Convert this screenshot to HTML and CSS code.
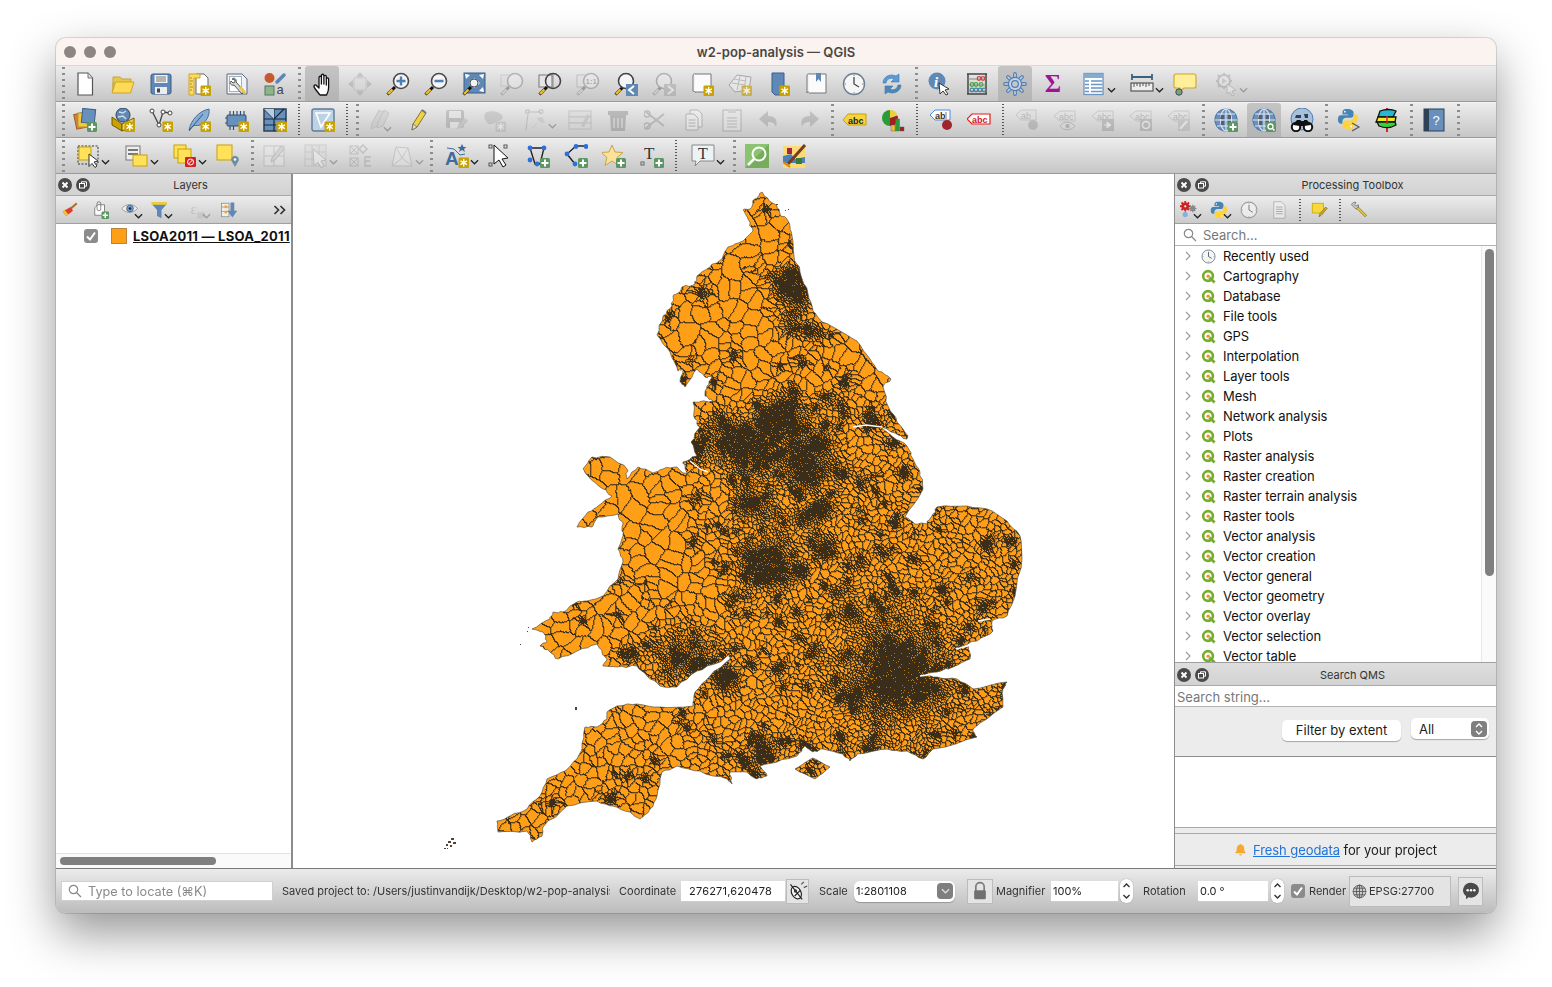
FILE: index.html
```html
<!DOCTYPE html>
<html lang="en">
<head>
  <meta charset="UTF-8" />
  <title>w2-pop-analysis — QGIS</title>
  <link rel="stylesheet" href="styles.css">
</head>
<body>

<svg class="defs" xmlns="http://www.w3.org/2000/svg">
  <defs>
    <g id="bs"><rect x="13.5" y="13.5" width="10.5" height="10.5" rx="1" fill="#c9a100"/><path d="M18.7 15v7.5M15.5 16.9l6.4 3.7M21.9 16.9l-6.4 3.7" stroke="#fff" stroke-width="1.4"/></g>
    <g id="bp"><rect x="14" y="14" width="10" height="10" rx="1.5" fill="#5c9663"/><path d="M19 15.5v7M15.5 19h7" stroke="#fff" stroke-width="2"/></g>
    <g id="tail"><path d="M1.5 22.5l7.5-7.5" stroke="#111" stroke-width="3"/><path d="M2 22l4.5-4.5" stroke="#efc02c" stroke-width="2.4"/></g>
    <g id="glass"><circle cx="15" cy="9" r="7.5" fill="#f5f5f5" stroke="#4a4a4a" stroke-width="1.6"/></g>
    <g id="abc-tag"><path d="M1 8l6-5h15v10H7z" fill="#e6e1d4" stroke="#8f8a78"/><text x="6" y="11.5" font-family="Liberation Sans" font-size="9" fill="#555">abc</text></g>
  </defs>
  <symbol id="new" viewBox="0 0 24 24"><path d="M5 1h10l4.500 5v17H5z" fill="#fff" stroke="#555" stroke-width="1.200"/><path d="M15 1v5h4.500" fill="#ddd" stroke="#777"/></symbol>
  <symbol id="open" viewBox="0 0 24 24"><path d="M2 19V5h7l2 2h9v4H2z" fill="#e8c648" stroke="#c9a530"/><path d="M1 21l3.500-11H23l-3.500 11z" fill="#ffda56" stroke="#c9a530"/></symbol>
  <symbol id="save" viewBox="0 0 24 24"><rect x="2" y="2" width="20" height="20" rx="2" fill="#5f88b6" stroke="#3b5d87"/><rect x="5.500" y="3" width="13" height="8" fill="#f2f2f2"/><path d="M7 5h10M7 7h10M7 9h10" stroke="#777"/><rect x="6" y="15" width="12" height="7" fill="#eee"/><rect x="8" y="16.500" width="3" height="4" fill="#445"/></symbol>
  <symbol id="tpl" viewBox="0 0 24 24"><path d="M9 2h8l4 4v16H9z" fill="#fff" stroke="#666"/><path d="M2 2h11v4H7v17H2z" fill="#ffdc58" stroke="#c9a530"/><path d="M3 6h2M3 9h3M3 12h2M3 15h3M3 18h2" stroke="#a8862a"/><use href="#bs"/></symbol>
  <symbol id="layout" viewBox="0 0 24 24"><path d="M2 2h15l5 5v15H2z" fill="#eef3fb" stroke="#667"/><rect x="4.500" y="4.500" width="12" height="15" fill="#fff" stroke="#9cb3d0"/><path d="M7 7c2-2 5 0 4 3l8 9-2 3-8-9c-3 1-5-2-3-4l2 2 2-1v-2z" fill="#d8d8d8" stroke="#555"/><path d="M14 16l5 6 2-2-5-6z" fill="#e8c840"/></symbol>
  <symbol id="style" viewBox="0 0 24 24"><circle cx="6.500" cy="6" r="5" fill="#c8582e"/><path d="M14 10L21 3" stroke="#5b87b5" stroke-width="3.500" stroke-linecap="round"/><rect x="2" y="14" width="9" height="9" fill="#8cb58d" stroke="#55775a"/><text x="13.500" y="22" font-family="Liberation Sans" font-size="13" fill="#444">a</text></symbol>
  <symbol id="hand" viewBox="-2 0 24 24"><path d="M8 23c-2-3-5.500-6-6-8.500-.3-1.500 1.400-2 2.400-1L7 16V5.500c0-1.700 2.400-1.700 2.400 0V12V3.500c0-1.700 2.500-1.700 2.500 0V12V4.500c0-1.600 2.400-1.600 2.400 0V13V7c0-1.500 2.300-1.500 2.300 0v9c0 3-1 5-2 7z" fill="#fff" stroke="#111" stroke-width="1.300" stroke-linejoin="round"/></symbol>
  <symbol id="pansel" viewBox="0 0 24 24"><rect x="6" y="6" width="12" height="12" fill="#f3e27a" stroke="#999"/><path d="M12 0l4 5H8zM12 24l4-5H8zM0 12l5-4v8zM24 12l-5-4v8z" fill="#5f88b6"/></symbol>
  <symbol id="zin" viewBox="0 0 24 24"><use href="#tail"/><use href="#glass"/><path d="M15 4.500v9M10.500 9h9" stroke="#4d7fb5" stroke-width="2.400"/></symbol>
  <symbol id="zout" viewBox="0 0 24 24"><use href="#tail"/><use href="#glass"/><path d="M10.500 9h9" stroke="#4d7fb5" stroke-width="2.400"/></symbol>
  <symbol id="zfull" viewBox="0 0 24 24"><rect x="2" y="1" width="21" height="20" fill="#5f88b6" stroke="#3c5f8a"/><path d="M12.500 6l-3 3h6zM12.500 16l-3-3h6zM7 11l3-3v6zM18 11l-3-3v6z" fill="#dfe8f2"/><path d="M3 2l5 1-4 4zM22 2l-5 1 4 4zM22 20l-5-1 4-4z" fill="#fff"/><use href="#tail"/><circle cx="12" cy="11" r="4" fill="#f3f3f3" stroke="#555"/></symbol>
  <symbol id="zsel" viewBox="0 0 24 24"><rect x="1" y="3" width="11" height="11" fill="#f3e27a" stroke="#999"/><use href="#tail"/><use href="#glass"/></symbol>
  <symbol id="zlayer" viewBox="0 0 24 24"><rect x="1" y="3" width="13" height="12" fill="#e6e6e6" stroke="#777"/><path d="M15 1.500V16.500" stroke="#888"/><use href="#tail"/><circle cx="15" cy="9" r="7.500" fill="none" stroke="#444" stroke-width="1.600"/></symbol>
  <symbol id="z11" viewBox="0 0 24 24"><rect x="1" y="3" width="12" height="12" fill="#e6e6e6" stroke="#777"/><use href="#tail"/><use href="#glass"/><text x="9.500" y="12" font-family="Liberation Sans" font-weight="bold" font-size="8" fill="#444">1:1</text></symbol>
  <symbol id="zlast" viewBox="0 0 24 24"><use href="#tail"/><circle cx="12" cy="9" r="7.500" fill="#f5f5f5" stroke="#444" stroke-width="1.600"/><rect x="12" y="12" width="12" height="12" fill="#5f88b6"/><path d="M20 14l-5 4 5 4" fill="none" stroke="#fff" stroke-width="2"/></symbol>
  <symbol id="znext" viewBox="0 0 24 24"><use href="#tail"/><circle cx="12" cy="9" r="7.500" fill="#f5f5f5" stroke="#444" stroke-width="1.600"/><rect x="12" y="12" width="12" height="12" fill="#5f88b6"/><path d="M16 14l5 4-5 4" fill="none" stroke="#fff" stroke-width="2"/></symbol>
  <symbol id="mapview" viewBox="0 0 24 24"><path d="M3 4c0-3 3-3 3 0v16c-2-1-3 0-3-1z" fill="#f2f2f2" stroke="#777"/><path d="M5 2h16v18H5" fill="#fbfbfb" stroke="#777"/><use href="#bs"/></symbol>
  <symbol id="map3d" viewBox="0 0 24 24"><path d="M1 13L9 3l14 2-2 13-14 2z" fill="#eee" stroke="#888"/><path d="M6 7l12 2M4 11l13 2M12 4l-3 14M18 5l-2 14" stroke="#aaa"/><use href="#bs"/></symbol>
  <symbol id="bmark" viewBox="0 0 24 24"><path d="M6 1h12v16l-3 6H9l-3-3z" fill="#5f88b6" stroke="#3c5f8a"/><use href="#bs"/></symbol>
  <symbol id="bmarks" viewBox="0 0 24 24"><path d="M3 4c0-3 3-3 3 0v17c-2-2-3-1-3 0z" fill="#f2f2f2" stroke="#777"/><path d="M5 2h17v19H5" fill="#fbfbfb" stroke="#777"/><path d="M12 1h5v9l-2.500-3L12 10z" fill="#5f88b6"/></symbol>
  <symbol id="clock" viewBox="0 0 24 24"><circle cx="12" cy="12" r="10.500" fill="#f6f6f6" stroke="#6f7f92" stroke-width="1.400"/><path d="M12 5v7l5 3" fill="none" stroke="#444" stroke-width="1.300"/><path d="M12 2.500v1.500M12 20v1.500M2.500 12H4M20 12h1.500" stroke="#789"/></symbol>
  <symbol id="refresh" viewBox="0 0 24 24"><path d="M3 11C3 5 10 1 16 4l3-2v8h-8l3-3c-4-2-7 0-8 4z" fill="#5b9bd5" stroke="#3c78ad" stroke-width=".6"/><path d="M21 13c0 6-7 10-13 7l-3 2v-8h8l-3 3c4 2 7 0 8-4z" fill="#4f86b8" stroke="#3c78ad" stroke-width=".6"/></symbol>
  <symbol id="identify" viewBox="0 0 24 24"><circle cx="10" cy="9" r="8.500" fill="#5f88b6"/><text x="7" y="15" font-family="Liberation Serif" font-style="italic" font-weight="bold" font-size="15" fill="#fff">i</text><path d="M12 11l10 6-4 1 3 4-2 1-3-4-3 3z" fill="#fff" stroke="#222" stroke-width=".9"/></symbol>
  <symbol id="abacus" viewBox="0 0 24 24"><path d="M2 2h20M2 22h20M3 2v20M21 2v20" stroke="#444" stroke-width="1.500"/><path d="M3 7h18M3 13h18M3 19h18" stroke="#888"/><g fill="none" stroke-width="1.200"><circle cx="14" cy="6.500" r="1.800" stroke="#c44"/><circle cx="18" cy="6.500" r="1.800" stroke="#c44"/><circle cx="7" cy="12.500" r="1.800" stroke="#4a4"/><circle cx="11" cy="12.500" r="1.800" stroke="#4a4"/><circle cx="16" cy="12.500" r="1.800" stroke="#4a4"/><circle cx="7" cy="18" r="1.800" stroke="#48a"/><circle cx="11" cy="18" r="1.800" stroke="#48a"/><circle cx="15" cy="18" r="1.800" stroke="#48a"/><circle cx="19" cy="18" r="1.800" stroke="#48a"/></g></symbol>
  <symbol id="gear" viewBox="0 0 24 24"><path d="M12 2v4M12 18v4M2 12h4M18 12h4M5 5l3 3M16 16l3 3M19 5l-3 3M8 16l-3 3" stroke="#4d7fb5" stroke-width="3.800" stroke-linecap="round"/><path d="M12 2v4M12 18v4M2 12h4M18 12h4M5 5l3 3M16 16l3 3M19 5l-3 3M8 16l-3 3" stroke="#c9d3df" stroke-width="1.600" stroke-linecap="round"/><circle cx="12" cy="12" r="7.200" fill="#4d7fb5"/><circle cx="12" cy="12" r="6" fill="#c9d3df"/><circle cx="12" cy="12" r="4" fill="#4d7fb5"/><circle cx="12" cy="12" r="2.800" fill="#c4c8ce"/></symbol>
  <symbol id="table" viewBox="0 0 24 24"><rect x="2" y="1.500" width="19" height="21" fill="#fff" stroke="#6a94c2" stroke-width="1.300"/><rect x="2" y="1.500" width="19" height="4.500" fill="#86abd2"/><path d="M3 9h4M3 12.500h4M3 16h4M3 19.500h4M9 9h11M9 12.500h11M9 16h11M9 19.500h11" stroke="#6a94c2" stroke-width="1.300"/></symbol>
  <symbol id="ruler" viewBox="0 0 24 24"><path d="M2 5h20M2 2v6M22 2v6" stroke="#3f5f80" stroke-width="1.800"/><rect x="1" y="11" width="22" height="8" fill="#eee" stroke="#555" stroke-width="1.200"/><path d="M4 11v4M7 11v3M10 11v4M13 11v3M16 11v4M19 11v3" stroke="#555"/></symbol>
  <symbol id="tip" viewBox="0 0 24 24"><path d="M3 2h18q2 0 2 2v10q0 2-2 2H11l-4 3 0-3H3q-2 0-2-2V4q0-2 2-2z" fill="#ffee9a" stroke="#cda52c" stroke-width="1.100"/><circle cx="6" cy="20" r="3.200" fill="#74a86a" stroke="#446"/></symbol>
  <symbol id="run" viewBox="0 0 24 24"><circle cx="10" cy="9" r="6" fill="#eee" stroke="#777" stroke-width="2"/><path d="M10 1v3M10 14v3M2 9h3M15 9h3M4 3l2 2M14 13l2 2M16 3l-2 2M4 15l2-2" stroke="#777" stroke-width="2"/><path d="M8 6l5 3-5 3z" fill="#999"/><path d="M13 12l9 6-4 1 2 4-2 1-2-4-3 2z" fill="#fff" stroke="#777"/></symbol>
  <symbol id="dsm" viewBox="0 0 24 24"><rect x="2" y="5" width="14" height="15" fill="#d2803c" stroke="#a25a22" transform="rotate(-12 9 12)"/><rect x="5" y="5" width="13" height="14" fill="#f3c93e" stroke="#b8962a"/><rect x="9" y="1" width="13" height="14" fill="#6790bd" stroke="#3c5f8a" transform="rotate(6 15 8)"/><use href="#bp"/></symbol>
  <symbol id="db3d" viewBox="0 0 24 24"><path d="M1 9l10 7v7L1 17z" fill="#c9a100" stroke="#715b00"/><path d="M11 16l12-6v8l-12 5z" fill="#f0d552" stroke="#715b00"/><circle cx="12" cy="7" r="7" fill="#5f88b6" stroke="#345"/><path d="M8 4l4 1 3-2M7 9l5-1 3 3" stroke="#cde" stroke-width="1.400" fill="none"/><use href="#bs"/></symbol>
  <symbol id="vec" viewBox="0 0 24 24"><path d="M3 3l7 14 4-13 7 1" fill="none" stroke="#444" stroke-width="1.300"/><g fill="#fff" stroke="#444"><circle cx="3" cy="3" r="2"/><circle cx="10" cy="17" r="2"/><circle cx="14" cy="4" r="2"/><circle cx="21" cy="5" r="2"/></g><use href="#bs"/></symbol>
  <symbol id="feather" viewBox="0 0 24 24"><path d="M2 22C4 12 12 3 22 1c1 6-3 14-9 16-3 1-6 0-7 1z" fill="#86aed6" stroke="#476f99"/><path d="M2 23L16 6" stroke="#2f4f70" stroke-width=".9"/><use href="#bs"/></symbol>
  <symbol id="chip" viewBox="0 0 24 24"><rect x="2" y="7" width="19" height="11" rx="1" fill="#6790bd" stroke="#2f4f70"/><path d="M5 3v4M8.500 3v4M12 3v4M15.500 3v4M19 3v4M0 10h2M0 15h2M5 18v4M8.500 18v4" stroke="#2f4f70" stroke-width="1.200"/><use href="#bs"/></symbol>
  <symbol id="mesh" viewBox="0 0 24 24"><rect x="1" y="1" width="22" height="22" fill="#6790bd" stroke="#2b3f55" stroke-width="1.500"/><path d="M1 1l10 10L21 1M1 11h22M11 11V1M11 11v12M1 17h12" stroke="#16293c" fill="none" stroke-width="1.200"/><path d="M1 1h10v10z" fill="#b7cde3"/><use href="#bs"/></symbol>
  <symbol id="meshdig" viewBox="0 0 24 24"><rect x="1" y="1" width="22" height="22" rx="2" fill="#bed2e6" stroke="#5c7a99" stroke-width="1.400"/><path d="M5 5l5 14 9-14z" fill="none" stroke="#fff" stroke-width="1.600"/><use href="#bs"/></symbol>
  <symbol id="pencils" viewBox="0 0 24 24"><path d="M3 21l1-6L11 2l5 3-7 13z" fill="#c4b69c" stroke="#888"/><path d="M9 20l1-6 6-12 5 3-6 13z" fill="#bbb" stroke="#888"/></symbol>
  <symbol id="pencil" viewBox="0 0 24 24"><path d="M6 22l1-6L16 2l4 3-9 14z" fill="#eed24a" stroke="#8a7420"/><path d="M6 22l1-6 4 3z" fill="#ddd" stroke="#555" stroke-width=".6"/><path d="M16 2l4 3" stroke="#777" stroke-width="2"/></symbol>
  <symbol id="saveedit" viewBox="0 0 24 24"><rect x="2" y="2" width="18" height="18" rx="2" fill="#777"/><rect x="5" y="3" width="12" height="7" fill="#eee"/><rect x="6" y="14" width="9" height="6" fill="#eee"/><path d="M13 21l1-4 7-7 3 3-7 7z" fill="#999"/></symbol>
  <symbol id="addpoly" viewBox="0 0 24 24"><path d="M3 5c5-3 14-2 17 2 2 3-1 6-4 6-3 1-5 4-9 3-3-1-6-7-4-11z" fill="#999"/><use href="#bs"/></symbol>
  <symbol id="vertex" viewBox="0 0 24 24"><rect x="3" y="2" width="3" height="3" fill="none" stroke="#666"/><path d="M6 4h12M5 6L3 22" stroke="#777"/><path d="M9 20l7-7-2-3 5-1 3 5-3 1-3-2-6 8z" fill="#aaa"/><circle cx="18" cy="3.500" r="2" fill="none" stroke="#666"/></symbol>
  <symbol id="selmove" viewBox="0 0 24 24"><rect x="1" y="3" width="22" height="6" fill="#e3d9a0" stroke="#888"/><rect x="1" y="9" width="22" height="6" fill="#e3d9a0" stroke="#888"/><rect x="1" y="15" width="22" height="6" fill="#e3d9a0" stroke="#888"/><path d="M13 18l6-12 3 2-6 11z" fill="#999"/></symbol>
  <symbol id="trash" viewBox="0 0 24 24"><path d="M2 3h20v4H2z" fill="#a05030"/><path d="M4 7h16l-1 16H5z" fill="#a05030"/><path d="M8 10v10M12 10v10M16 10v10" stroke="#fff"/></symbol>
  <symbol id="cut" viewBox="0 0 24 24"><path d="M2 4l18 14M2 20L20 6" stroke="#666" stroke-width="1.800"/><circle cx="3" cy="6" r="3" fill="none" stroke="#666" stroke-width="1.400"/><circle cx="3" cy="18" r="3" fill="none" stroke="#666" stroke-width="1.400"/></symbol>
  <symbol id="copy" viewBox="0 0 24 24"><path d="M8 2h8l4 4v13H8z" fill="#fff" stroke="#555"/><path d="M4 6h8l4 4v12H4z" fill="#fff" stroke="#555"/><path d="M6.500 12h7M6.500 15h7M6.500 18h7" stroke="#555"/></symbol>
  <symbol id="paste" viewBox="0 0 24 24"><rect x="3" y="2" width="18" height="21" fill="#eee" stroke="#555"/><rect x="8" y="1" width="8" height="4" fill="#aaa"/><path d="M7 10h10M7 13h10M7 16h10M7 19h10" stroke="#666"/></symbol>
  <symbol id="undo" viewBox="0 0 24 24"><path d="M10 3L1 11l9 8v-5c4 0 7 1 8 5 2-7-1-11-8-11z" fill="#777"/></symbol>
  <symbol id="redo" viewBox="0 0 24 24"><path d="M14 3l9 8-9 8v-5c-4 0-7 1-8 5-2-7 1-11 8-11z" fill="#777"/></symbol>
  <symbol id="abcy" viewBox="0 0 24 24"><path d="M0 12l5-6h18v11H5z" fill="#f4d43f" stroke="#c9a100"/><text x="5" y="15.500" font-family="Liberation Sans" font-weight="bold" font-size="9" fill="#222">abc</text></symbol>
  <symbol id="pie" viewBox="0 0 24 24"><path d="M9 10V2a8 8 0 0 1 7.500 5.500z" fill="#e8d23c"/><path d="M9 10L16.500 7.500A8 8 0 0 1 9 18z" fill="#a02020"/><path d="M9 10v8A8 8 0 0 1 9 2z" fill="#2d9a3a"/><rect x="10" y="17" width="4" height="6" fill="#efc02c" stroke="#555" stroke-width=".4"/><rect x="14.500" y="11" width="4" height="12" fill="#2d9a3a" stroke="#555" stroke-width=".4"/><rect x="19" y="19" width="4" height="4" fill="#a02020" stroke="#555" stroke-width=".4"/></symbol>
  <symbol id="abpin" viewBox="0 0 24 24"><path d="M1 7l5-5h15v10H6z" fill="#fff" stroke="#4d8ce8"/><text x="6" y="10.500" font-family="Liberation Sans" font-weight="bold" font-size="9" fill="#333">ab</text><path d="M17 4v10" stroke="#bbb" stroke-width="2"/><circle cx="18" cy="17" r="5" fill="#a0242c"/></symbol>
  <symbol id="abcred" viewBox="0 0 24 24"><path d="M0 11l5-5h18v10H5z" fill="#fff" stroke="#e81c1c" stroke-width="1.200"/><text x="5" y="14.500" font-family="Liberation Sans" font-weight="bold" font-size="9" fill="#d01818">abc</text></symbol>
  <symbol id="abpin2" viewBox="0 0 24 24"><path d="M1 7l5-5h15v10H6z" fill="#e0dccc" stroke="#8f8a78"/><text x="6" y="10.500" font-family="Liberation Sans" font-size="9" fill="#555">ab</text><circle cx="18" cy="17" r="5" fill="#777"/></symbol>
  <symbol id="abceye" viewBox="0 0 24 24"><use href="#abc-tag"/><path d="M7 18c4-5 10-5 15 0-5 5-11 5-15 0z" fill="#ddd" stroke="#666"/><circle cx="14.500" cy="18" r="2.200" fill="#666"/></symbol>
  <symbol id="abcmove" viewBox="0 0 24 24"><use href="#abc-tag"/><rect x="11" y="11" width="12" height="12" fill="#777"/><path d="M13 17h5M16 14l4 3-4 3z" stroke="#fff" fill="#fff"/></symbol>
  <symbol id="abcrot" viewBox="0 0 24 24"><use href="#abc-tag"/><rect x="11" y="11" width="12" height="12" fill="#777"/><circle cx="17" cy="17" r="3.500" fill="none" stroke="#fff" stroke-width="1.500"/></symbol>
  <symbol id="abcedit" viewBox="0 0 24 24"><use href="#abc-tag"/><rect x="11" y="11" width="12" height="12" fill="#999"/><path d="M13 21l7-8" stroke="#fff" stroke-width="2"/></symbol>
  <symbol id="globe" viewBox="0 0 24 24"><circle cx="12" cy="12" r="11" fill="#6f8fb8" stroke="#4d7fb5" stroke-width="1.200"/><path d="M12 1v22M1 12h22M3 6h18M3 18h18" stroke="#dfe8f2" stroke-width="1.100"/><ellipse cx="12" cy="12" rx="5.500" ry="11" fill="none" stroke="#dfe8f2" stroke-width="1.100"/><path d="M7 7h3v4H6zM14 7h3v4h-3zM14 13h3v4h-3zM7 13h3v4H7z" fill="#55606e"/></symbol>
  <symbol id="globeadd" viewBox="0 0 24 24"><use href="#globe"/><use href="#bp"/></symbol>
  <symbol id="globefind" viewBox="0 0 24 24"><use href="#globe"/><rect x="14" y="14" width="10" height="10" rx="1.500" fill="#5c9663"/><circle cx="18.500" cy="18.500" r="2.500" fill="none" stroke="#fff" stroke-width="1.300"/><path d="M20 20l2.500 2.500" stroke="#fff" stroke-width="1.400"/></symbol>
  <symbol id="binoc" viewBox="0 0 24 24"><circle cx="12" cy="11" r="11" fill="#a9c0da" stroke="#4d7fb5"/><path d="M6 7h5v3H5zM14 6h4v4h-3zM8 12h3v3H8z" fill="#2b3f55"/><path d="M9 13h6v5H9z" fill="#111"/><circle cx="6" cy="19" r="4.200" fill="#fff" stroke="#111" stroke-width="2"/><circle cx="18" cy="19" r="4.200" fill="#fff" stroke="#111" stroke-width="2"/><path d="M3 17l4-5h3v6zM21 17l-4-5h-3v6z" fill="#111"/></symbol>
  <symbol id="python" viewBox="0 0 24 24"><path d="M11 1C6 1 6 3 6 5v2h6v1H4c-2 0-3 2-3 4.500S2 17 4 17h2v-3c0-2 2-3.500 4-3.500h5c2 0 3-1.500 3-3V5c0-2-2-4-7-4z" fill="#4584b6"/><circle cx="8.500" cy="4" r="1" fill="#fff"/><path d="M13 23c5 0 5-2 5-4v-2h-6v-1h8c2 0 3-2 3-4.500S22 7 20 7h-2v3c0 2-2 3.500-4 3.500H9c-2 0-3 1.500-3 3V19c0 2 2 4 7 4z" fill="#ffd43b"/><circle cx="15.500" cy="20" r="1" fill="#fff"/></symbol>
  <symbol id="pyterm" viewBox="0 0 24 24"><g transform="scale(.92)"><use href="#python"/></g><path d="M15 15l7 4-7 4" fill="none" stroke="#555" stroke-width="1.200"/></symbol>
  <symbol id="stack" viewBox="0 0 24 24"><path d="M12 0v4M12 20v4" stroke="#e02020" stroke-width="2"/><path d="M5 3c5-2 12-2 16 0l-3 6H3z" fill="#25b7d3" stroke="#111" stroke-width="1.300"/><path d="M3 9h18l-1 5H1z" fill="#efe92c" stroke="#111" stroke-width="1.300"/><path d="M2 14h18l1 3c-5 3-12 3-17 1z" fill="#35d335" stroke="#111" stroke-width="1.300"/><path d="M12 8v8" stroke="#e02020" stroke-width="1.500"/></symbol>
  <symbol id="help" viewBox="0 0 24 24"><rect x="2" y="1" width="20" height="22" fill="#6790bd" stroke="#2b3f55"/><rect x="2" y="1" width="5" height="22" fill="#2f4258"/><text x="10.500" y="16.500" font-family="Liberation Sans" font-size="13" fill="#fff">?</text></symbol>
  <symbol id="selrect" viewBox="0 0 24 24"><rect x="2" y="2" width="20" height="18" fill="none" stroke="#333" stroke-dasharray="2 1.500"/><rect x="3" y="3" width="12" height="13" fill="#ffe25a" stroke="#c9a100"/><path d="M13 10l9 7-4 1 3 4-2 1.500-3-4-3 3z" fill="#fff" stroke="#333"/></symbol>
  <symbol id="selattr" viewBox="0 0 24 24"><rect x="1" y="2" width="14" height="14" fill="#eee" stroke="#777"/><path d="M3 6h10M3 10h10" stroke="#777" stroke-width="2"/><rect x="8" y="11" width="14" height="11" fill="#ffe25a" stroke="#c9a100"/></symbol>
  <symbol id="desel" viewBox="0 0 24 24"><rect x="1" y="1" width="12" height="13" fill="#ffe25a" stroke="#c9a100"/><rect x="5" y="5" width="13" height="14" fill="#ffe25a" stroke="#c9a100"/><rect x="12" y="13" width="11" height="10" rx="1" fill="#d82020"/><circle cx="17.500" cy="18" r="3" fill="none" stroke="#fff"/><path d="M15.500 20l4-4" stroke="#fff"/></symbol>
  <symbol id="sellocate" viewBox="0 0 24 24"><rect x="1" y="1" width="15" height="15" fill="#ffe25a" stroke="#c9a100"/><path d="M19 23l-3.500-6a3.800 3.800 0 1 1 7 0z" fill="#6f8fa0"/><circle cx="19" cy="15.500" r="1.300" fill="#fff"/></symbol>
  <symbol id="formedit" viewBox="0 0 24 24"><rect x="1" y="2" width="20" height="20" fill="#eee" stroke="#888"/><path d="M1 12h20M11 2v20" stroke="#888"/><path d="M8 18l1-4 9-12 3 3-9 11z" fill="#bbb" stroke="#777"/></symbol>
  <symbol id="tableptr" viewBox="0 0 24 24"><rect x="1" y="1" width="21" height="21" fill="#d8d8c8" stroke="#999"/><path d="M1 8h21M1 15h21M8 1v21M15 1v21" stroke="#999"/><path d="M9 5l13 11-5 1 3 5-3 1.500-3-5-4 3z" fill="#fff" stroke="#777"/></symbol>
  <symbol id="selexpr" viewBox="0 0 24 24"><rect x="1" y="2" width="8" height="8" fill="none" stroke="#777"/><path d="M1 2l8 8M9 2l-8 8M1 14l8 8M9 14l-8 8" stroke="#777"/><rect x="1" y="14" width="8" height="8" fill="none" stroke="#777"/><path d="M14 1l4 4-4 4-4-4zM22 13h-6v4h5M16 17v5h6" fill="none" stroke="#777" stroke-width="1.400"/></symbol>
  <symbol id="meshedit" viewBox="0 0 24 24"><path d="M2 22L6 3l12 1 4 18z" fill="#f0f0f0" stroke="#888"/><path d="M6 3l6 11 6-10M2 22l10-8 10 8" stroke="#999" fill="none"/></symbol>
  <symbol id="label" viewBox="0 0 24 24"><text x="0" y="21" font-family="Liberation Sans" font-weight="bold" font-size="19" fill="#3f6c9c">A</text><path d="M2 4l7 1 6 6 5-1" fill="none" stroke="#3f6c9c"/><path d="M17 0l1.500 3h3l-2.500 2 1 3-3-2-3 2 1-3-2.500-2h3z" fill="#3f6c9c"/><use href="#bs"/></symbol>
  <symbol id="selanno" viewBox="0 0 24 24"><rect x="1" y="1" width="3" height="3" fill="none" stroke="#555"/><rect x="16" y="1" width="3" height="3" fill="none" stroke="#555"/><rect x="1" y="19" width="3" height="3" fill="none" stroke="#555"/><path d="M6 1l14 13-6 1 4 6-3 2-4-7-5 4z" fill="#fff" stroke="#111"/></symbol>
  <symbol id="polyadd" viewBox="0 0 24 24"><path d="M4 4h14l-4 16H9z" fill="none" stroke="#222" stroke-width="1.400"/><g fill="#2d6fe0"><circle cx="4" cy="4" r="2.400"/><circle cx="18" cy="4" r="2.400"/><circle cx="4" cy="16" r="2.400"/><circle cx="11" cy="20" r="2.400"/></g><use href="#bp"/></symbol>
  <symbol id="lineadd" viewBox="0 0 24 24"><path d="M12 2L3 10l8 10" fill="none" stroke="#222" stroke-width="1.400"/><path d="M12 2h10" stroke="#222" stroke-width="1.400"/><g fill="#2d6fe0"><circle cx="12" cy="2.500" r="2.400"/><circle cx="22" cy="2.500" r="2.400"/><circle cx="3" cy="10" r="2.400"/><circle cx="11" cy="20" r="2.400"/></g><use href="#bp"/></symbol>
  <symbol id="star" viewBox="0 0 24 24"><path d="M10 1l3 7 8 .5-6 5 2 8-7-4.500L3 21.500l2-8-6-5 8-.5z" fill="#fbe29a" stroke="#c9a54a"/><use href="#bp"/></symbol>
  <symbol id="tadd" viewBox="0 0 24 24"><text x="4" y="15" font-family="Liberation Serif" font-size="17" fill="#333">T</text><rect x="1" y="18" width="3" height="3" fill="none" stroke="#666"/><use href="#bp"/></symbol>
  <symbol id="tcap" viewBox="0 0 24 24"><path d="M1 1h22v16H9l-5 5 1-5H1z" fill="#ecf3f6" stroke="#888"/><text x="7" y="15" font-family="Liberation Serif" font-size="16" fill="#333">T</text></symbol>
  <symbol id="qfind" viewBox="0 0 24 24"><rect x="0" y="0" width="24" height="24" fill="#76ad5b"/><path d="M0 0h24L0 24z" fill="#8cc370"/><circle cx="14" cy="10" r="6.500" fill="none" stroke="#fff" stroke-width="2"/><path d="M9 15l-6 6" stroke="#fff" stroke-width="2.500"/></symbol>
  <symbol id="mapedit" viewBox="0 0 24 24"><rect x="0" y="2" width="22" height="22" fill="#fbdc74"/><path d="M0 12l8-2 4 5 10-2v6H0z" fill="#4d7fb5"/><rect x="4" y="4" width="5" height="6" fill="#a24"/><rect x="13" y="14" width="6" height="6" fill="#3a7a3a"/><path d="M0 18l7 5" stroke="#d80" stroke-width="2"/><path d="M5 20L22 1" stroke="#7a3a1c" stroke-width="3"/></symbol>
  <symbol id="clear" viewBox="0 0 24 24"><path d="M12 11l9-8" stroke="#a9762c" stroke-width="3"/><path d="M2 14l11-6 3 5-9 7z" fill="#e03c2a"/><path d="M2 14l5 6 3-2-5-6z" fill="#f0c52c"/></symbol>
  <symbol id="addgroup" viewBox="0 0 24 24"><path d="M9 5h9v14H5V9z" fill="#fff" stroke="#666"/><rect x="8" y="1" width="5" height="12" rx="2.500" fill="none" stroke="#666"/><use href="#bp"/></symbol>
  <symbol id="eye" viewBox="0 0 24 24"><path d="M1 10c6-7 15-7 21 0-6 7-15 7-21 0z" fill="#eee" stroke="#888"/><circle cx="12" cy="10" r="4.500" fill="#6f9fd8" stroke="#456"/><circle cx="12" cy="10" r="1.800" fill="#123"/></symbol>
  <symbol id="funnel" viewBox="0 0 24 24"><path d="M1 2h20v2l-7 8v11l-6-3v-8L1 4z" fill="#5f88b6"/><rect x="1" y="1.500" width="20" height="3.500" fill="#f4cf2c"/></symbol>
  <symbol id="eps" viewBox="0 0 24 24"><text x="2" y="17" font-family="Liberation Serif" font-size="20" fill="#888">ε</text><path d="M11 15h10v8h-10z" fill="#aaa"/></symbol>
  <symbol id="expand" viewBox="0 0 24 24"><rect x="2" y="3" width="10" height="18" fill="#eee" stroke="#888"/><path d="M2 8h10M2 14h10" stroke="#c58a30"/><rect x="6" y="6" width="3.500" height="3.500" fill="#f0a33a"/><rect x="6" y="13" width="3.500" height="3.500" fill="#f0a33a"/><path d="M14 2h5v11h4l-6.500 9L10 13h4z" fill="#5f88b6"/></symbol>
  <symbol id="gears" viewBox="0 0 24 24"><circle cx="7" cy="7" r="5" fill="#d02020"/><path d="M7 0v14M0 7h14M2 2l10 10M12 2L2 12" stroke="#d02020" stroke-width="2.400"/><circle cx="7" cy="7" r="1.500" fill="#eee"/><circle cx="17" cy="10" r="3.500" fill="#888"/><path d="M17 5v10M12 10h10M13.500 6.500l7 7M20.500 6.500l-7 7" stroke="#888" stroke-width="1.600"/><circle cx="7" cy="18" r="3.500" fill="#88aee0"/></symbol>
  <symbol id="report" viewBox="0 0 24 24"><path d="M5 1h10l5 5v17H5z" fill="#f2f2f2" stroke="#888"/><path d="M8 8h9M8 11h9M8 14h9M8 17h9" stroke="#888" stroke-width="1.200"/></symbol>
  <symbol id="editmodel" viewBox="0 0 24 24"><rect x="3" y="3" width="15" height="13" fill="#f7d93b" stroke="#c9a100"/><path d="M12 21l1-4 8-9 2 2-8 9z" fill="#caa72c" stroke="#8a7420"/></symbol>
  <symbol id="wrench" viewBox="0 0 24 24"><path d="M2 5c1-3 4-4 6-3L6 5l2 2 3-2c1 2 0 5-3 6z" fill="#ccc" stroke="#666"/><path d="M9 10l11 11 2-2-11-11z" fill="#eacb3a" stroke="#7d6a20"/></symbol>
  <symbol id="q" viewBox="0 0 16 16"><circle cx="7.500" cy="7.500" r="5.200" fill="none" stroke="#76ad2c" stroke-width="2.800"/><path d="M9 9l5.500 5.500" stroke="#76ad2c" stroke-width="3"/><circle cx="7.600" cy="7.600" r="1.800" fill="#ef8f33"/></symbol>
  <symbol id="mouse" viewBox="0 0 24 24"><ellipse cx="10" cy="14" rx="5.500" ry="8" fill="#f6f6f6" stroke="#222" stroke-width="1.400" transform="rotate(-28 10 14)"/><path d="M3 4l14 18M8 18l7-7" stroke="#222" stroke-width="1.400"/><circle cx="9" cy="12" r="2" fill="#333"/><path d="M16 4l3-3M19 8l4-2" stroke="#555" stroke-width="1.500"/></symbol>
  <symbol id="lock" viewBox="0 0 24 24"><path d="M7 12V7a5 5 0 0 1 10 0v5" fill="none" stroke="#7b7b7b" stroke-width="2"/><rect x="5" y="11" width="14" height="11" rx="1.500" fill="#6f6f6f"/></symbol>
  <symbol id="epsg" viewBox="0 0 16 16"><circle cx="8" cy="8" r="6.800" fill="#ccc" stroke="#666"/><path d="M8 1v14M1 8h14M2 4.500h12M2 11.500h12" stroke="#555" stroke-width=".9"/><ellipse cx="8" cy="8" rx="3.300" ry="6.800" fill="none" stroke="#555" stroke-width=".9"/></symbol>
  <symbol id="msg" viewBox="0 0 24 24"><path d="M12 2a9.500 9 0 1 1-3 17.500L6 22v-4A9.500 9 0 0 1 12 2z" fill="#4a4a4a"/><circle cx="8" cy="11" r="1.500" fill="#fff"/><circle cx="12" cy="11" r="1.500" fill="#fff"/><circle cx="16" cy="11" r="1.500" fill="#fff"/></symbol>
  <symbol id="bell" viewBox="0 0 14 14"><path d="M7 1a1 1 0 0 1 1 1c2 .5 3 2 3 4 0 3 1 4 2 5H1c1-1 2-2 2-5 0-2 1-3.500 3-4a1 1 0 0 1 1-1zM5.500 12h3a1.500 1.500 0 0 1-3 0z" fill="#f5a92e"/></symbol>
  <symbol id="loupe" viewBox="0 0 14 14"><circle cx="5.500" cy="5.500" r="4.200" fill="none" stroke="#888" stroke-width="1.200"/><path d="M8.500 8.500l4.500 4.500" stroke="#888" stroke-width="1.300"/></symbol>
  <symbol id="caret" viewBox="0 0 10 6"><path d="M1 1l4 4 4-4" fill="none" stroke="#222" stroke-width="1.400"/></symbol>
  <symbol id="chev" viewBox="0 0 6 10"><path d="M1 1l4 4-4 4" fill="none" stroke="#9a9a9a" stroke-width="1.100"/></symbol>
  <symbol id="x" viewBox="0 0 14 14"><circle cx="7" cy="7" r="7" fill="#4a4a4a"/><path d="M4.500 4.500l5 5M9.500 4.500l-5 5" stroke="#fff" stroke-width="1.900"/></symbol>
  <symbol id="float" viewBox="0 0 14 14"><circle cx="7" cy="7" r="7" fill="#4a4a4a"/><path d="M5.500 5V3.800h5v4.400H9" fill="none" stroke="#fff"/><rect x="3.500" y="5.500" width="5" height="4.500" fill="none" stroke="#fff"/></symbol>
  <symbol id="check" viewBox="0 0 14 14"><path d="M3 7.500l3 3 5-7" fill="none" stroke="#fff" stroke-width="2"/></symbol>
  <symbol id="updown" viewBox="0 0 10 14"><path d="M2 5l3-3 3 3M2 9l3 3 3-3" fill="none" stroke="#fff" stroke-width="1.400"/></symbol>
  <symbol id="spin" viewBox="0 0 12 24"><path d="M3 8l3-3 3 3M3 16l3 3 3-3" fill="none" stroke="#333" stroke-width="1.400"/></symbol>
  <symbol id="morechev" viewBox="0 0 14 10"><path d="M1.500 1l4 4-4 4M7.500 1l4 4-4 4" fill="none" stroke="#333" stroke-width="1.700"/></symbol>
</svg>

<div class="window">
  <div class="titlebar">
    <div class="lights"><span class="light"></span><span class="light"></span><span class="light"></span></div>
    <div class="title">w2-pop-analysis — QGIS</div>
  </div>

  <div class="toolbar">
    <span class="grip"></span>
    <div class="tool"><svg class="ic"><use href="#new"/></svg></div>
    <div class="tool"><svg class="ic"><use href="#open"/></svg></div>
    <div class="tool"><svg class="ic"><use href="#save"/></svg></div>
    <div class="tool"><svg class="ic"><use href="#tpl"/></svg></div>
    <div class="tool"><svg class="ic"><use href="#layout"/></svg></div>
    <div class="tool"><svg class="ic"><use href="#style"/></svg></div>
    <span class="grip end"></span>
    <div class="tool on"><svg class="ic"><use href="#hand"/></svg></div>
    <div class="tool off"><svg class="ic"><use href="#pansel"/></svg></div>
    <div class="tool"><svg class="ic"><use href="#zin"/></svg></div>
    <div class="tool"><svg class="ic"><use href="#zout"/></svg></div>
    <div class="tool"><svg class="ic"><use href="#zfull"/></svg></div>
    <div class="tool off"><svg class="ic"><use href="#zsel"/></svg></div>
    <div class="tool"><svg class="ic"><use href="#zlayer"/></svg></div>
    <div class="tool off"><svg class="ic"><use href="#z11"/></svg></div>
    <div class="tool"><svg class="ic"><use href="#zlast"/></svg></div>
    <div class="tool off"><svg class="ic"><use href="#znext"/></svg></div>
    <div class="tool"><svg class="ic"><use href="#mapview"/></svg></div>
    <div class="tool off2"><svg class="ic"><use href="#map3d"/></svg></div>
    <div class="tool"><svg class="ic"><use href="#bmark"/></svg></div>
    <div class="tool"><svg class="ic"><use href="#bmarks"/></svg></div>
    <div class="tool"><svg class="ic"><use href="#clock"/></svg></div>
    <div class="tool"><svg class="ic"><use href="#refresh"/></svg></div>
    <span class="grip end"></span>
    <div class="tool"><svg class="ic"><use href="#identify"/></svg></div>
    <div class="tool"><svg class="ic"><use href="#abacus"/></svg></div>
    <div class="tool on"><svg class="ic"><use href="#gear"/></svg></div>
    <div class="tool"><span class="sigma">Σ</span></div>
    <div class="tool w48"><svg class="ic"><use href="#table"/></svg><svg class="caret"><use href="#caret"/></svg></div>
    <div class="tool w46"><svg class="ic"><use href="#ruler"/></svg><svg class="caret"><use href="#caret"/></svg></div>
    <div class="tool"><svg class="ic"><use href="#tip"/></svg></div>
    <div class="tool off w48"><svg class="ic"><use href="#run"/></svg><svg class="caret"><use href="#caret"/></svg></div>
  </div>

  <div class="toolbar">
    <span class="grip"></span>
    <div class="tool"><svg class="ic"><use href="#dsm"/></svg></div>
    <div class="tool"><svg class="ic"><use href="#db3d"/></svg></div>
    <div class="tool"><svg class="ic"><use href="#vec"/></svg></div>
    <div class="tool"><svg class="ic"><use href="#feather"/></svg></div>
    <div class="tool"><svg class="ic"><use href="#chip"/></svg></div>
    <div class="tool"><svg class="ic"><use href="#mesh"/></svg></div>
    <span class="dots"></span>
    <div class="tool"><svg class="ic"><use href="#meshdig"/></svg></div>
    <span class="dots"></span>
    <span class="grip end"></span>
    <div class="tool off"><svg class="ic"><use href="#pencils"/></svg><svg class="caret tight"><use href="#caret"/></svg></div>
    <div class="tool"><svg class="ic"><use href="#pencil"/></svg></div>
    <div class="tool off"><svg class="ic"><use href="#saveedit"/></svg></div>
    <div class="tool off"><svg class="ic"><use href="#addpoly"/></svg></div>
    <div class="tool off w48"><svg class="ic"><use href="#vertex"/></svg><svg class="caret"><use href="#caret"/></svg></div>
    <div class="tool off"><svg class="ic"><use href="#selmove"/></svg></div>
    <div class="tool off"><svg class="ic"><use href="#trash"/></svg></div>
    <div class="tool off"><svg class="ic"><use href="#cut"/></svg></div>
    <div class="tool off"><svg class="ic"><use href="#copy"/></svg></div>
    <div class="tool off"><svg class="ic"><use href="#paste"/></svg></div>
    <div class="tool off"><svg class="ic"><use href="#undo"/></svg></div>
    <div class="tool off"><svg class="ic"><use href="#redo"/></svg></div>
    <span class="grip end"></span>
    <div class="tool"><svg class="ic"><use href="#abcy"/></svg></div>
    <div class="tool"><svg class="ic"><use href="#pie"/></svg></div>
    <span class="dots"></span>
    <div class="tool"><svg class="ic"><use href="#abpin"/></svg></div>
    <div class="tool"><svg class="ic"><use href="#abcred"/></svg></div>
    <span class="dots"></span>
    <div class="tool off"><svg class="ic"><use href="#abpin2"/></svg></div>
    <div class="tool off"><svg class="ic"><use href="#abceye"/></svg></div>
    <div class="tool off"><svg class="ic"><use href="#abcmove"/></svg></div>
    <div class="tool off"><svg class="ic"><use href="#abcrot"/></svg></div>
    <div class="tool off"><svg class="ic"><use href="#abcedit"/></svg></div>
    <span class="grip end"></span>
    <div class="tool"><svg class="ic"><use href="#globeadd"/></svg></div>
    <div class="tool on"><svg class="ic"><use href="#globefind"/></svg></div>
    <div class="tool"><svg class="ic"><use href="#binoc"/></svg></div>
    <span class="grip end"></span>
    <div class="tool"><svg class="ic"><use href="#pyterm"/></svg></div>
    <div class="tool"><svg class="ic"><use href="#stack"/></svg></div>
    <span class="grip end"></span>
    <div class="tool"><svg class="ic"><use href="#help"/></svg></div>
    <span class="grip end"></span>
  </div>

  <div class="toolbar">
    <span class="grip"></span>
    <div class="tool w49"><svg class="ic"><use href="#selrect"/></svg><svg class="caret"><use href="#caret"/></svg></div>
    <div class="tool w48"><svg class="ic"><use href="#selattr"/></svg><svg class="caret"><use href="#caret"/></svg></div>
    <div class="tool w46"><svg class="ic"><use href="#desel"/></svg><svg class="caret"><use href="#caret"/></svg></div>
    <div class="tool"><svg class="ic"><use href="#sellocate"/></svg></div>
    <span class="grip end"></span>
    <div class="tool off"><svg class="ic"><use href="#formedit"/></svg></div>
    <div class="tool off w48"><svg class="ic"><use href="#tableptr"/></svg><svg class="caret"><use href="#caret"/></svg></div>
    <div class="tool off"><svg class="ic"><use href="#selexpr"/></svg></div>
    <div class="tool off w46"><svg class="ic"><use href="#meshedit"/></svg><svg class="caret"><use href="#caret"/></svg></div>
    <span class="grip end"></span>
    <div class="tool w46"><svg class="ic"><use href="#label"/></svg><svg class="caret"><use href="#caret"/></svg></div>
    <div class="tool"><svg class="ic"><use href="#selanno"/></svg></div>
    <div class="tool"><svg class="ic"><use href="#polyadd"/></svg></div>
    <div class="tool"><svg class="ic"><use href="#lineadd"/></svg></div>
    <div class="tool"><svg class="ic"><use href="#star"/></svg></div>
    <div class="tool"><svg class="ic"><use href="#tadd"/></svg></div>
    <span class="dots"></span>
    <div class="tool w48"><svg class="ic"><use href="#tcap"/></svg><svg class="caret"><use href="#caret"/></svg></div>
    <span class="grip end"></span>
    <div class="tool"><svg class="ic"><use href="#qfind"/></svg></div>
    <div class="tool"><svg class="ic"><use href="#mapedit"/></svg></div>
  </div>

  <div class="main">
    <div class="dock-left">
      <div class="dock-title">
        <svg class="dock-btn"><use href="#x"/></svg>
        <svg class="dock-btn"><use href="#float"/></svg>
        <span class="dock-name">Layers</span>
      </div>
      <div class="dock-tools">
        <div class="dtool"><svg class="ic-s"><use href="#clear"/></svg></div>
        <div class="dtool"><svg class="ic-s"><use href="#addgroup"/></svg></div>
        <div class="dtool"><svg class="ic-s"><use href="#eye"/></svg><svg class="caret"><use href="#caret"/></svg></div>
        <div class="dtool"><svg class="ic-s"><use href="#funnel"/></svg><svg class="caret"><use href="#caret"/></svg></div>
        <div class="dtool off push"><svg class="ic-s"><use href="#eps"/></svg><svg class="caret"><use href="#caret"/></svg></div>
        <div class="dtool near"><svg class="ic-s"><use href="#expand"/></svg></div>
        <svg class="more"><use href="#morechev"/></svg>
      </div>
      <div class="layer-tree">
        <div class="layer-row">
          <span class="cb"><svg class="cb-ic"><use href="#check"/></svg></span>
          <span class="swatch"></span>
          <span class="layer-name">LSOA2011 — LSOA_2011</span>
        </div>
      </div>
      <div class="hscroll"><span class="hthumb"></span></div>
    </div>

    <div class="map"><canvas id="mapCanvas" width="881" height="694"></canvas></div>

    <div class="dock-right">
      <div class="dock-title">
        <svg class="dock-btn"><use href="#x"/></svg>
        <svg class="dock-btn"><use href="#float"/></svg>
        <span class="dock-name">Processing Toolbox</span>
      </div>
      <div class="dock-tools">
        <div class="ptool"><svg class="ic-s"><use href="#gears"/></svg><svg class="caret"><use href="#caret"/></svg></div>
        <div class="ptool"><svg class="ic-s"><use href="#python"/></svg><svg class="caret"><use href="#caret"/></svg></div>
        <div class="ptool off"><svg class="ic-s"><use href="#clock"/></svg></div>
        <div class="ptool off"><svg class="ic-s"><use href="#report"/></svg></div>
        <span class="dots small"></span>
        <div class="ptool"><svg class="ic-s"><use href="#editmodel"/></svg></div>
        <span class="dots small"></span>
        <div class="ptool"><svg class="ic-s"><use href="#wrench"/></svg></div>
      </div>
      <div class="tb-search"><svg class="loupe"><use href="#loupe"/></svg>Search...</div>
      <div class="algos">
        <div class="algo-list">
          <div class="algo"><svg class="chev"><use href="#chev"/></svg><svg class="q"><use href="#clock"/></svg>Recently used</div>
          <div class="algo"><svg class="chev"><use href="#chev"/></svg><svg class="q"><use href="#q"/></svg>Cartography</div>
          <div class="algo"><svg class="chev"><use href="#chev"/></svg><svg class="q"><use href="#q"/></svg>Database</div>
          <div class="algo"><svg class="chev"><use href="#chev"/></svg><svg class="q"><use href="#q"/></svg>File tools</div>
          <div class="algo"><svg class="chev"><use href="#chev"/></svg><svg class="q"><use href="#q"/></svg>GPS</div>
          <div class="algo"><svg class="chev"><use href="#chev"/></svg><svg class="q"><use href="#q"/></svg>Interpolation</div>
          <div class="algo"><svg class="chev"><use href="#chev"/></svg><svg class="q"><use href="#q"/></svg>Layer tools</div>
          <div class="algo"><svg class="chev"><use href="#chev"/></svg><svg class="q"><use href="#q"/></svg>Mesh</div>
          <div class="algo"><svg class="chev"><use href="#chev"/></svg><svg class="q"><use href="#q"/></svg>Network analysis</div>
          <div class="algo"><svg class="chev"><use href="#chev"/></svg><svg class="q"><use href="#q"/></svg>Plots</div>
          <div class="algo"><svg class="chev"><use href="#chev"/></svg><svg class="q"><use href="#q"/></svg>Raster analysis</div>
          <div class="algo"><svg class="chev"><use href="#chev"/></svg><svg class="q"><use href="#q"/></svg>Raster creation</div>
          <div class="algo"><svg class="chev"><use href="#chev"/></svg><svg class="q"><use href="#q"/></svg>Raster terrain analysis</div>
          <div class="algo"><svg class="chev"><use href="#chev"/></svg><svg class="q"><use href="#q"/></svg>Raster tools</div>
          <div class="algo"><svg class="chev"><use href="#chev"/></svg><svg class="q"><use href="#q"/></svg>Vector analysis</div>
          <div class="algo"><svg class="chev"><use href="#chev"/></svg><svg class="q"><use href="#q"/></svg>Vector creation</div>
          <div class="algo"><svg class="chev"><use href="#chev"/></svg><svg class="q"><use href="#q"/></svg>Vector general</div>
          <div class="algo"><svg class="chev"><use href="#chev"/></svg><svg class="q"><use href="#q"/></svg>Vector geometry</div>
          <div class="algo"><svg class="chev"><use href="#chev"/></svg><svg class="q"><use href="#q"/></svg>Vector overlay</div>
          <div class="algo"><svg class="chev"><use href="#chev"/></svg><svg class="q"><use href="#q"/></svg>Vector selection</div>
          <div class="algo"><svg class="chev"><use href="#chev"/></svg><svg class="q"><use href="#q"/></svg>Vector table</div>
        </div>
        <div class="vscroll"><span class="vthumb"></span></div>
      </div>

      <div class="dock-title qms-title">
        <svg class="dock-btn"><use href="#x"/></svg>
        <svg class="dock-btn"><use href="#float"/></svg>
        <span class="dock-name">Search QMS</span>
      </div>
      <div class="qms-input">Search string...</div>
      <div class="qms-form">
        <span class="pill-btn">Filter by extent</span>
        <span class="pill-select">All<span class="updown"><svg class="updown-ic"><use href="#updown"/></svg></span></span>
      </div>
      <div class="qms-results"></div>
      <div class="qms-banner"><svg class="bell"><use href="#bell"/></svg><a class="link" href="#">Fresh geodata</a>&nbsp;for your project</div>
    </div>
  </div>

  <div class="statusbar">
    <div class="locator"><svg class="loupe"><use href="#loupe"/></svg>Type to locate (⌘K)</div>
    <div class="message">Saved project to: /Users/justinvandijk/Desktop/w2-pop-analysis.qgz</div>
    <span class="s-label s-coord">Coordinate</span>
    <span class="s-input s-coordval">276271,620478</span>
    <span class="s-btn s-mouse"><svg class="s-ic"><use href="#mouse"/></svg></span>
    <span class="s-label s-scale">Scale</span>
    <span class="s-combo">1:2801108<span class="combo-arrow"><svg class="combo-ic"><use href="#caret"/></svg></span></span>
    <span class="s-btn s-lock"><svg class="s-ic"><use href="#lock"/></svg></span>
    <span class="s-label s-magn">Magnifier</span>
    <span class="s-input s-magval">100%</span>
    <span class="s-spin s-spin1"><svg class="spin-ic"><use href="#spin"/></svg></span>
    <span class="s-label s-rot">Rotation</span>
    <span class="s-input s-rotval">0.0 °</span>
    <span class="s-spin s-spin2"><svg class="spin-ic"><use href="#spin"/></svg></span>
    <span class="cb s-check"><svg class="cb-ic"><use href="#check"/></svg></span>
    <span class="s-label s-render">Render</span>
    <span class="s-btn s-epsg"><svg class="epsg-ic"><use href="#epsg"/></svg>EPSG:27700</span>
    <span class="s-btn s-msg"><svg class="s-ic"><use href="#msg"/></svg></span>
  </div>
</div>

<script src="map.js"></script>
</body>
</html>
```

FILE: styles.css
```css
* {
  box-sizing: border-box;
}
html, body {
  margin: 0;
  height: 100%;
  background: #fff;
  overflow: hidden;
}
body {
  padding: 38px 0 0 56px;
  font-family: "Inter", "Liberation Sans", sans-serif;
  color: #1c1c1c;
}
.defs {
  width: 0;
  height: 0;
  display: block;
  overflow: hidden;
}

.window {
  width: 1440px;
  height: 875px;
  border-radius: 10px;
  overflow: hidden;
  display: flex;
  flex-direction: column;
  background: #e8e8e8;
  box-shadow: 0 20px 48px rgba(0, 0, 0, 0.42), 0 0 0 1px rgba(0, 0, 0, 0.12);
}

.titlebar {
  height: 28px;
  flex: none;
  display: flex;
  align-items: center;
  background: #fbf3f0;
  border-bottom: 1px solid #d8d8d8;
}
.lights {
  width: 640px;
  padding-left: 8px;
  display: flex;
  gap: 8px;
}
.light {
  width: 12px;
  height: 12px;
  border-radius: 50%;
  background: #8d8583;
}
.title {
  width: 160px;
  font-size: 13px;
  font-weight: 600;
  color: #4a4644;
  text-align: center;
  white-space: nowrap;
}

.toolbar {
  height: 36px;
  flex: none;
  display: flex;
  align-items: stretch;
  background: linear-gradient(#ececec, #c6c6c6);
  border-bottom: 1px solid #9a9a9a;
}
.toolbar + .toolbar {
  border-top: 1px solid #f2f2f2;
}
.tool {
  width: 38px;
  flex: none;
  display: flex;
  align-items: center;
  justify-content: center;
}
.tool.w46, .tool.w48, .tool.w49 {
  justify-content: flex-start;
  padding-left: 10px;
}
.w46 { width: 46px; }
.w48 { width: 48px; }
.w49 { width: 49px; }
.tool.on {
  background: linear-gradient(#c4c4c4, #b4b4b4);
  margin: 0 2px;
  width: 34px;
  border-radius: 3px 3px 0 0;
}
.off .ic, .off .ic-s, .off .caret {
  opacity: 0.3;
  filter: grayscale(1);
}
.ptool.off .ic-s {
  opacity: 0.65;
}
.off2 .ic {
  opacity: 0.65;
}
.ic {
  width: 24px;
  height: 24px;
  flex: none;
}
.ic-s {
  width: 18px;
  height: 18px;
  flex: none;
}
.caret {
  width: 9px;
  height: 6px;
  flex: none;
  margin-left: 1px;
  margin-top: 12px;
}
.caret.tight {
  margin-left: -9px;
  margin-top: 18px;
}
.sigma {
  color: #a3119b;
  font: bold 25px "Liberation Serif", serif;
}

.grip {
  width: 10px;
  flex: none;
  background: radial-gradient(circle, #8a8a8a 1.1px, transparent 1.5px) 6px 5px / 3px 6px repeat-y;
}
.grip.end {
  width: 9px;
  background-position: 4px 5px;
}
.dots {
  width: 10px;
  flex: none;
  background: radial-gradient(circle, #555 0.6px, transparent 0.9px) 4px 3px / 2px 3px repeat-y;
}
.dots.small {
  align-self: stretch;
  margin: 2px 0;
}

.main {
  height: 694px;
  flex: none;
  display: flex;
  background: #ddd;
}
.dock-left {
  width: 237px;
  flex: none;
  display: flex;
  flex-direction: column;
  border-right: 2px solid #8c8c8c;
  background: #ececec;
}
.dock-right {
  width: 322px;
  flex: none;
  display: flex;
  flex-direction: column;
  border-left: 1px solid #8c8c8c;
  background: #ececec;
}
.dock-title {
  height: 22px;
  flex: none;
  display: flex;
  align-items: center;
  gap: 4px;
  padding-left: 2px;
  background: linear-gradient(#dedede, #d2d2d2);
  border-bottom: 1px solid #a8a8a8;
}
.dock-btn {
  width: 14px;
  height: 14px;
  flex: none;
}
.dock-name {
  flex: 1;
  padding-right: 4px;
  text-align: center;
  font-size: 11px;
  color: #333;
}
.dock-tools {
  height: 28px;
  flex: none;
  display: flex;
  align-items: center;
  background: linear-gradient(#ececec, #cbcbcb);
  border-bottom: 1px solid #9f9f9f;
}
.dtool {
  width: 30px;
  flex: none;
  display: flex;
  align-items: center;
  justify-content: flex-start;
  padding-left: 6px;
}
.dtool:first-child {
  margin-left: -1px;
}
.dtool.push {
  margin-left: 8px;
}
.dtool.near {
  margin-left: 1px;
}
.ptool {
  width: 30px;
  flex: none;
  display: flex;
  align-items: center;
  justify-content: flex-start;
  padding-left: 5px;
}
.dtool .caret, .ptool .caret {
  margin-left: -5px;
  margin-top: 13px;
}
.more {
  width: 14px;
  height: 10px;
  flex: none;
  margin-left: 29px;
}

.layer-tree {
  flex: 1;
  background: #fff;
  overflow: hidden;
  padding-top: 2px;
}
.layer-row {
  height: 20px;
  display: flex;
  align-items: center;
  white-space: nowrap;
  padding-left: 28px;
}
.cb {
  width: 14px;
  height: 14px;
  flex: none;
  display: inline-flex;
  border-radius: 3px;
  background: #8b8b8b;
}
.cb-ic {
  width: 14px;
  height: 14px;
}
.swatch {
  width: 16px;
  height: 16px;
  flex: none;
  margin-left: 13px;
  background: #ff9e17;
  border: 1px solid #b9853c;
}
.layer-name {
  margin-left: 6px;
  font-size: 13px;
  font-weight: 700;
  letter-spacing: 0.25px;
  text-decoration: underline;
  color: #111;
}
.hscroll {
  height: 15px;
  flex: none;
  background: #fafafa;
  border-top: 1px solid #e4e4e4;
  padding: 3px 0 0 4px;
}
.hthumb {
  display: block;
  width: 156px;
  height: 8px;
  border-radius: 4px;
  background: #7f7f7f;
}

.map {
  width: 881px;
  flex: none;
  background: #fff;
}
#mapCanvas {
  display: block;
}

.tb-search {
  height: 22px;
  flex: none;
  display: flex;
  align-items: center;
  background: #fff;
  border-bottom: 1px solid #b4b4b4;
  font-size: 13px;
  color: #777;
  padding-left: 8px;
}
.loupe {
  width: 14px;
  height: 14px;
  flex: none;
  margin-right: 6px;
}
.algos {
  height: 417px;
  flex: none;
  display: flex;
  background: #fff;
  border-bottom: 1px solid #9f9f9f;
  overflow: hidden;
}
.algo-list {
  width: 306px;
  flex: none;
}
.algo {
  height: 20px;
  display: flex;
  align-items: center;
  font-size: 13px;
  letter-spacing: -0.08px;
  color: #111;
  white-space: nowrap;
}
.chev {
  width: 6px;
  height: 10px;
  flex: none;
  margin-left: 10px;
}
.q {
  width: 15px;
  height: 15px;
  flex: none;
  margin: 0 7px 0 10px;
}
.vscroll {
  width: 15px;
  flex: none;
  background: #fafafa;
  border-left: 1px solid #e8e8e8;
  padding: 3px 0 0 3px;
}
.vthumb {
  display: block;
  width: 9px;
  height: 327px;
  border-radius: 5px;
  background: #7f7f7f;
}

.qms-title {
  height: 23px;
  padding-top: 1px;
}
.qms-input {
  height: 21px;
  flex: none;
  background: #fff;
  border-bottom: 1px solid #b4b4b4;
  padding-left: 2px;
  font-size: 13px;
  line-height: 22px;
  color: #777;
}
.qms-form {
  height: 50px;
  flex: none;
  display: flex;
  justify-content: flex-end;
  align-items: flex-start;
  gap: 10px;
  padding: 11px 7px 0 0;
  border-bottom: 1px solid #8c8c8c;
}
.pill-btn {
  width: 119px;
  height: 21px;
  margin-top: 2px;
  border-radius: 5px;
  background: #fff;
  box-shadow: 0 1px 1px rgba(0, 0, 0, 0.3);
  font-size: 13px;
  line-height: 21px;
  text-align: center;
}
.pill-select {
  width: 78px;
  height: 21px;
  display: flex;
  align-items: center;
  justify-content: space-between;
  padding: 0 2px 0 8px;
  border-radius: 5px;
  background: #fff;
  box-shadow: 0 1px 1px rgba(0, 0, 0, 0.3);
  font-size: 13px;
}
.updown {
  width: 16px;
  height: 16px;
  display: flex;
  align-items: center;
  justify-content: center;
  border-radius: 4px;
  background: #7f7f7f;
}
.updown-ic {
  width: 10px;
  height: 14px;
}
.qms-results {
  height: 71px;
  flex: none;
  background: #fff;
  border-bottom: 1px solid #a8a8a8;
}
.qms-banner {
  height: 33px;
  margin-top: 5px;
  flex: none;
  display: flex;
  align-items: center;
  justify-content: center;
  border-top: 1px solid #a8a8a8;
  border-bottom: 1px solid #a8a8a8;
  font-size: 13px;
  letter-spacing: -0.08px;
  color: #1c1c1c;
}
.bell {
  width: 13px;
  height: 13px;
  flex: none;
  margin-right: 6px;
}
.link {
  color: #2473d8;
}

.statusbar {
  height: 45px;
  flex: none;
  display: flex;
  align-items: center;
  border-top: 1px solid #7a7a7a;
  background: linear-gradient(#ebebeb, #bcbcbc);
  font-size: 11px;
  color: #333;
  white-space: nowrap;
}
.locator {
  width: 212px;
  height: 20px;
  margin-left: 5px;
  display: flex;
  align-items: center;
  padding-left: 6px;
  background: #fff;
  border: 1px solid #d0d0d0;
  font-size: 12.7px;
  color: #8a8a8a;
}
.locator .loupe {
  margin-right: 6px;
}
.message {
  width: 328px;
  margin-left: 9px;
  overflow: hidden;
}
.s-label {
  flex: none;
}
.s-input {
  height: 21px;
  flex: none;
  line-height: 21px;
  padding-left: 2px;
  background: #fff;
  border-bottom: 1px solid #ccc;
  color: #222;
}
.s-btn {
  height: 32px;
  flex: none;
  display: flex;
  align-items: center;
  justify-content: center;
  border: 1px solid #bcbcbc;
  background: #e4e4e4;
}
.s-ic {
  width: 20px;
  height: 20px;
}
.s-coord { width: 58px; margin-left: 9px; }
.s-coordval { width: 104px; margin-left: 4px; padding-left: 8px; letter-spacing: 0.2px; }
.s-mouse { width: 23px; height: 25px; margin-left: 1px; }
.s-scale { width: 31px; margin-left: 10px; }
.s-combo {
  width: 101px;
  height: 21px;
  margin-left: 4px;
  flex: none;
  display: flex;
  align-items: center;
  justify-content: space-between;
  padding: 0 2px;
  background: #fff;
  border-radius: 6px;
  color: #222;
  box-shadow: 0 1px 1px rgba(0, 0, 0, 0.25);
}
.combo-arrow {
  width: 16px;
  height: 16px;
  display: flex;
  align-items: center;
  justify-content: center;
  border-radius: 4px;
  background: #7f7f7f;
}
.combo-ic {
  width: 9px;
  height: 6px;
  filter: invert(1);
}
.s-lock { width: 26px; height: 25px; margin-left: 12px; }
.s-magn { width: 51px; margin-left: 3px; }
.s-magval { width: 67px; margin-left: 4px; }
.s-spin {
  width: 13px;
  height: 24px;
  flex: none;
  border-radius: 6px;
  background: #fff;
  box-shadow: 0 0 1px rgba(0, 0, 0, 0.4);
}
.spin-ic {
  width: 13px;
  height: 24px;
  display: block;
}
.s-spin1 { margin-left: 2px; }
.s-rot { width: 51px; margin-left: 10px; }
.s-rotval { width: 70px; margin-left: 4px; }
.s-spin2 { margin-left: 3px; }
.s-check { margin-left: 7px; }
.s-render { width: 37px; margin-left: 4px; }
.s-epsg {
  width: 102px;
  height: 31px;
  margin-left: 3px;
  gap: 2px;
  justify-content: flex-start;
  padding-left: 2px;
}
.epsg-ic {
  width: 15px;
  height: 15px;
}
.s-msg { width: 25px; height: 29px; margin-left: 7px; }
```

FILE: map.js
```js
// England & Wales LSOA choropleth, drawn from a hand traced coast + generated cells.
// Coordinates are page pixels, the canvas starts at (293, 175).
const OX = 293, OY = 175, W = 881, H = 694;

let seed = 20111;
function rnd() {
  seed = (seed * 1664525 + 1013904223) >>> 0;
  return (seed >>> 8) / 16777216;
}

const coast = [
  [762,193],[768,200],[777,207],[780,215],[788,222],[792,237],[794,257],[800,273],[808,295],[813,312],
  [822,323],[840,332],[857,342],[870,360],[878,372],[891,380],[883,388],[888,407],[897,423],[908,437],
  [907,440],[895,434],[880,427],[893,438],[907,447],[913,460],[920,473],[923,490],[905,518],[915,525],
  [927,525],[932,517],[937,508],[967,507],[987,510],[1007,522],[1020,537],[1022,560],[1015,597],[1007,617],
  [992,622],[993,632],[977,642],[955,648],[968,647],[970,660],[953,668],[937,673],[920,677],[937,678],
  [957,680],[973,690],[1007,683],[1003,690],[1003,708],[973,730],[977,738],[933,750],[923,760],[907,752],
  [887,750],[857,755],[850,762],[843,755],[823,750],[813,753],[805,747],[797,757],[777,763],[760,767],
  [767,777],[757,780],[747,773],[730,773],[732,785],[727,780],[700,772],[677,767],[662,773],[657,797],
  [650,810],[640,820],[630,813],[613,807],[597,802],[567,807],[543,828],[542,837],[532,843],[527,832],
  [498,833],[497,822],[510,817],[527,810],[540,797],[547,780],[565,772],[577,760],[582,750],[585,728],
  [597,728],[607,720],[607,713],[617,707],[637,705],[660,708],[693,707],[695,693],[710,677],[730,660],
  [730,655],[720,663],[697,672],[677,688],[660,687],[647,677],[637,667],[617,668],[603,667],[607,660],
  [602,653],[597,645],[577,652],[558,660],[550,653],[540,647],[547,642],[543,633],[532,630],[550,620],
  [553,613],[563,613],[577,603],[587,602],[603,597],[618,580],[623,563],[618,550],[623,537],[623,525],
  [618,515],[598,518],[592,528],[577,528],[588,513],[598,507],[612,497],[603,490],[588,477],[583,470],
  [592,458],[610,458],[627,470],[627,480],[638,468],[653,474],[663,470],[677,468],[690,478],[685,467],
  [683,463],[697,457],[691,443],[700,428],[695,420],[693,403],[713,402],[705,397],[707,387],[712,377],
  [705,378],[697,370],[685,388],[680,383],[683,370],[678,372],[670,353],[657,336],[663,317],[672,307],
  [673,297],[680,293],[682,288],[695,285],[697,277],[710,268],[722,260],[728,248],[743,242],[753,232],
  [748,220],[743,211],[750,210],[755,200]
];
const wight = [[795,770],[813,759],[830,768],[815,780]];

// x, y, sigma, peak density
const towns = [
  [790,285,9,.7],[797,300,9,.18],[790,320,10,.14],[812,332,6,.5],[793,335,4,.3],[795,277,4,.4],
  [793,395,5,.3],[825,398,5,.35],[703,293,4,.45],[683,380,3,.4],[787,420,13,.6],[773,423,8,.6],
  [873,420,5,.6],[750,450,14,.75],[733,443,9,.6],[717,423,7,.45],[695,447,9,.7],[803,460,11,.6],
  [823,443,7,.35],[893,443,4,.4],[750,503,8,.6],[695,500,4,.4],[767,563,13,.85],[820,510,7,.7],
  [803,517,5,.5],[807,480,7,.4],[862,483,4,.35],[823,548,7,.6],[798,573,5,.6],[883,555,4,.45],
  [988,543,4,.55],[840,592,4,.45],[852,615,5,.45],[887,620,4,.4],[912,593,3,.4],[985,610,4,.45],
  [967,628,3,.4],[817,648,4,.4],[778,668,4,.5],[725,680,7,.8],[835,682,4,.45],[852,698,7,.45],
  [897,673,17,1],[897,673,36,.16],[937,648,3,.5],[942,698,3,.45],[763,755,6,.7],[810,750,4,.6],
  [840,755,3,.6],[870,752,4,.6],[745,760,4,.6],[927,753,3,.5],[1005,685,3,.5],[680,657,16,.32],
  [630,657,5,.35],[700,665,4,.6],[610,798,4,.6],[657,763,3,.55],[687,730,3,.45],[715,740,3,.4],
  [647,780,3,.3],[770,510,13,.1],[830,470,13,.09]
];
// thinly peopled uplands, almost no seeds here
const empty = [[735,255,13],[765,222,6],[640,520,14],[620,600,8],[660,560,9],[700,330,10]];

function base(x, y) {
  if (y < 395) return 1 / 170;
  if (x < 690 && y < 660) return 1 / 170;
  if (x < 690) return 1 / 85;
  if (x < 720 && y < 620) return 1 / 100;
  return 1 / 48;
}

// blotchy noise so the towns do not come out as smooth discs
function buildNoise() {
  const G = 6, gw = Math.ceil(W / G) + 2, gh = Math.ceil(H / G) + 2;
  const grid = new Float32Array(gw * gh);
  for (let i = 0; i < grid.length; i++) grid[i] = rnd();
  const n = new Float32Array(W * H);
  for (let y = 0; y < H; y++) {
    const gy = y / G, y0 = Math.floor(gy), fy = gy - y0;
    for (let x = 0; x < W; x++) {
      const gx = x / G, x0 = Math.floor(gx), fx = gx - x0;
      const a = grid[y0 * gw + x0], b = grid[y0 * gw + x0 + 1];
      const c = grid[(y0 + 1) * gw + x0], e = grid[(y0 + 1) * gw + x0 + 1];
      const v = (a * (1 - fx) + b * fx) * (1 - fy) + (c * (1 - fx) + e * fx) * fy;
      n[y * W + x] = 0.55 + 1.9 * v * v;
    }
  }
  return n;
}

function buildDensity() {
  const d = new Float32Array(W * H);
  const noise = buildNoise();
  for (let y = 0; y < H; y++)
    for (let x = 0; x < W; x++) d[y * W + x] = base(x + OX, y + OY);

  function blob(cx, cy, s, w) {
    const r = Math.ceil(s * 2.6);
    for (let y = Math.max(0, cy - OY - r); y < Math.min(H, cy - OY + r); y++)
      for (let x = Math.max(0, cx - OX - r); x < Math.min(W, cx - OX + r); x++) {
        const dx = x - (cx - OX), dy = y - (cy - OY), i = y * W + x;
        d[i] += w * noise[i] * Math.exp(-(dx * dx + dy * dy) / (2 * s * s));
      }
  }
  towns.forEach(t => blob(t[0], t[1], t[2], t[3]));
  // market towns scattered over the map
  for (let i = 0; i < 640; i++) {
    const x = 520 + rnd() * 500, y = 195 + rnd() * 640;
    const keep = y > 400 && x > 690 ? 1 : 0.3;
    if (rnd() < keep) blob(x | 0, y | 0, 1.2 + rnd() * 1.8, 0.35 + rnd() * 0.4);
  }
  empty.forEach(e => {
    for (let y = e[1] - e[2]; y < e[1] + e[2]; y++)
      for (let x = e[0] - e[2]; x < e[0] + e[2]; x++) {
        const dx = x - e[0], dy = y - e[1];
        if (dx * dx + dy * dy < e[2] * e[2]) d[(y - OY) * W + x - OX] *= 0.2;
      }
  });
  return d;
}

// seeds spaced by the local density, so rural cells come out even
function buildSeeds(d) {
  const used = new Uint8Array(W * H);
  const seeds = [];
  for (let y = 0; y < H; y++) {
    for (let x = 0; x < W; x++) {
      const p = d[y * W + x];
      if (rnd() >= p * 1.6) continue;
      const r = Math.floor(0.55 / Math.sqrt(p));
      let free = true;
      for (let yy = Math.max(0, y - r); free && yy <= Math.min(H - 1, y + r); yy++)
        for (let xx = Math.max(0, x - r); xx <= Math.min(W - 1, x + r); xx++)
          if (used[yy * W + xx]) { free = false; break; }
      if (free) {
        used[y * W + x] = 1;
        seeds.push([x, y]);
      }
    }
  }
  return seeds;
}

// jump flood, nearest seed for every pixel
function buildLabels(seeds) {
  let cur = new Int32Array(W * H).fill(-1);
  let next = new Int32Array(W * H);
  seeds.forEach((s, i) => { cur[s[1] * W + s[0]] = i; });
  const sx = seeds.map(s => s[0]), sy = seeds.map(s => s[1]);

  for (let step = 512; step >= 1; step >>= 1) {
    for (let y = 0; y < H; y++) {
      for (let x = 0; x < W; x++) {
        let best = cur[y * W + x], bd = 1e12;
        if (best >= 0) bd = (sx[best] - x) ** 2 + (sy[best] - y) ** 2;
        for (let j = -1; j <= 1; j++) {
          for (let i = -1; i <= 1; i++) {
            const nx = x + i * step, ny = y + j * step;
            if (nx < 0 || ny < 0 || nx >= W || ny >= H) continue;
            const l = cur[ny * W + nx];
            if (l < 0) continue;
            const dist = (sx[l] - x) ** 2 + (sy[l] - y) ** 2;
            if (dist < bd) { bd = dist; best = l; }
          }
        }
        next[y * W + x] = best;
      }
    }
    const t = cur; cur = next; next = t;
  }
  return cur;
}

// bend the straight cell edges a little
function warp(labels) {
  const out = new Int32Array(W * H);
  for (let y = 0; y < H; y++) {
    for (let x = 0; x < W; x++) {
      const wx = 1.8 * Math.sin(y * 0.09 + 2 * Math.sin(x * 0.05)) + 1.1 * Math.sin(y * 0.27 + x * 0.13);
      const wy = 1.8 * Math.sin(x * 0.08 + 2 * Math.sin(y * 0.06)) + 1.1 * Math.sin(x * 0.29 - y * 0.11);
      const nx = Math.min(W - 1, Math.max(0, Math.round(x + wx)));
      const ny = Math.min(H - 1, Math.max(0, Math.round(y + wy)));
      out[y * W + x] = labels[ny * W + nx];
    }
  }
  return out;
}

function roughen(pts, amp) {
  const out = [];
  for (let i = 0; i < pts.length; i++) {
    const a = pts[i], b = pts[(i + 1) % pts.length];
    out.push(a);
    for (let k = 1; k < 4; k++) {
      out.push([
        a[0] + (b[0] - a[0]) * k / 4 + (rnd() - 0.5) * amp,
        a[1] + (b[1] - a[1]) * k / 4 + (rnd() - 0.5) * amp
      ]);
    }
  }
  return out;
}

function trace(ctx, pts) {
  pts.forEach((p, i) => i ? ctx.lineTo(p[0], p[1]) : ctx.moveTo(p[0], p[1]));
  ctx.closePath();
}

function drawMap() {
  const labels = warp(buildLabels(buildSeeds(buildDensity())));

  const off = document.createElement("canvas");
  off.width = W;
  off.height = H;
  const octx = off.getContext("2d");
  const img = octx.createImageData(W, H);
  for (let y = 0; y < H; y++) {
    for (let x = 0; x < W; x++) {
      const i = y * W + x, l = labels[i];
      const hard = (x < W - 1 && labels[i + 1] !== l) || (y < H - 1 && labels[i + W] !== l);
      const soft = (x > 0 && labels[i - 1] !== l) || (y > 0 && labels[i - W] !== l);
      // hard side of a border is dark, the other side half way to orange
      let a = hard ? (soft ? 1 : 0.82) : soft ? 0.3 : 0;
      // dense areas keep a few orange specks
      if (a === 1 && rnd() < 0.05) a = 0.35;
      const p = i * 4;
      img.data[p] = 0xff + (0x3a - 0xff) * a;
      img.data[p + 1] = 0x9e + (0x2e - 0x9e) * a;
      img.data[p + 2] = 0x17 + (0x1b - 0x17) * a;
      img.data[p + 3] = 255;
    }
  }
  octx.putImageData(img, 0, 0);

  const ctx = document.getElementById("mapCanvas").getContext("2d");
  ctx.translate(-OX, -OY);
  const main = roughen(coast, 2.2), iow = roughen(wight, 1);

  ctx.save();
  ctx.beginPath();
  trace(ctx, main);
  trace(ctx, iow);
  ctx.clip();
  ctx.drawImage(off, OX, OY);
  ctx.restore();

  ctx.strokeStyle = "rgba(85,72,50,.65)";
  ctx.lineWidth = 1;
  ctx.beginPath();
  trace(ctx, main);
  trace(ctx, iow);
  ctx.stroke();

  // estuaries that the coast polygon does not open up
  ctx.strokeStyle = "#fff";
  ctx.lineWidth = 1.4;
  [[[853,428],[866,426],[882,428]], [[920,677],[934,675]], [[978,622],[990,620]],
   [[956,650],[968,647]], [[690,462],[700,470],[708,473]]].forEach(s => {
    ctx.beginPath();
    s.forEach((p, i) => i ? ctx.lineTo(p[0], p[1]) : ctx.moveTo(p[0], p[1]));
    ctx.stroke();
  });

  // little islands
  ctx.fillStyle = "#53442a";
  [[444,849,2,1],[446,845,2,2],[448,842,3,2],[451,839,3,2],[453,843,3,2],[450,846,2,2],[447,849,1,1],
   [575,708,2,3],[528,628,1,1],[527,632,1,1],[520,645,1,1],[776,205,2,1],[785,211,1,1],[788,210,1,1]].forEach(r => {
    ctx.fillRect(r[0], r[1], r[2], r[3]);
  });
}

drawMap();
```
